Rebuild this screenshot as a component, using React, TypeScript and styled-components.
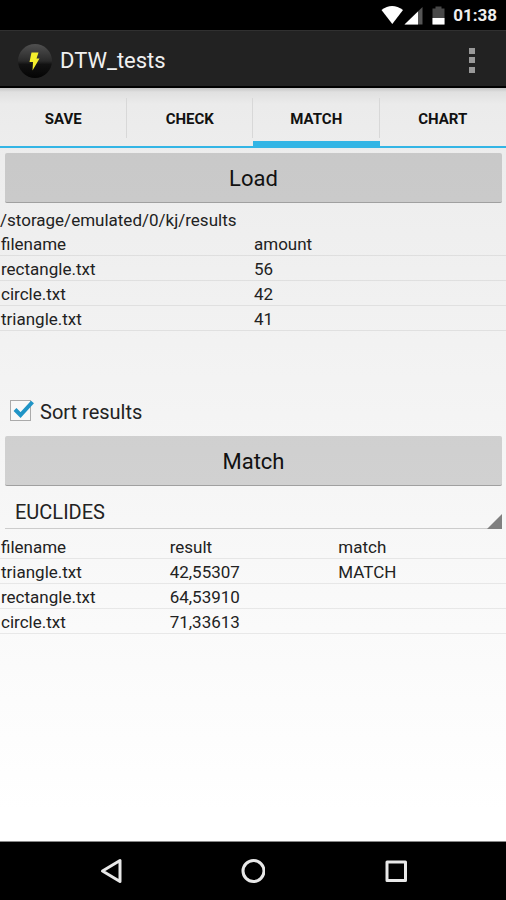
import { useState } from 'react';
import styled, { createGlobalStyle } from 'styled-components';

const TABS = ['SAVE', 'CHECK', 'MATCH', 'CHART'];

const FILES = [
    { filename: 'rectangle.txt', amount: '56' },
    { filename: 'circle.txt', amount: '42' },
    { filename: 'triangle.txt', amount: '41' },
];

const RESULTS = [
    { filename: 'triangle.txt', result: '42,55307', match: 'MATCH' },
    { filename: 'rectangle.txt', result: '64,53910', match: '' },
    { filename: 'circle.txt', result: '71,33613', match: '' },
];

const StatusIcons = () => (
    <svg width="66" height="20" viewBox="0 0 66 20" aria-hidden="true">
        <path d="M1.500 5Q12 -3 23 5L12.300 19Z" fill="#fff" />
        <path d="M42.500 2V19.500H24.500Z" fill="#555" />
        <path d="M38 6.500V19.500H24.500Z" fill="#fff" />
        <path d="M52.500 3.500H55.500V1.500H61.500V3.500H64.500V19.500H52.500Z" fill="#484848" />
        <path d="M52.500 13H64.500V19.500H52.500Z" fill="#fff" />
    </svg>
);

const AppIcon = () => (
    <svg width="36" height="36" viewBox="0 0 36 36" aria-hidden="true">
        <defs>
            <linearGradient id="ball" x1="0" y1="0" x2="0" y2="1">
                <stop offset="0" stopColor="#505050" />
                <stop offset="0.5" stopColor="#2a2a2a" />
                <stop offset="0.6" stopColor="#121212" />
                <stop offset="1" stopColor="#040404" />
            </linearGradient>
        </defs>
        <circle cx="18" cy="18" r="17" fill="url(#ball)" />
        <path d="M14.500 9.500H21.500L19.500 15.500H22.500L15.500 27.500L16 19H12.500Z" fill="#f4ef2c" />
    </svg>
);

const App = () => {
    const [tab, setTab] = useState<string>('MATCH');
    const [sort, setSort] = useState<boolean>(true);
    const [method, setMethod] = useState<string>('EUCLIDES');

    return (
        <Screen>
            <GlobalStyle />
            <StatusBar>
                <StatusIcons />
                <span>01:38</span>
            </StatusBar>
            <ActionBar>
                <AppIcon />
                <Title>DTW_tests</Title>
                <MenuButton aria-label="More options">
                    <svg width="8" height="28" viewBox="0 0 8 28" aria-hidden="true">
                        <path d="M1 1H7V7H1ZM1 10H7V16H1ZM1 20H7V26H1Z" fill="#999" />
                    </svg>
                </MenuButton>
            </ActionBar>
            <Tabs>
                {TABS.map((name) => (
                    <Tab key={name} $active={tab === name} onClick={() => setTab(name)}>{name}</Tab>
                ))}
            </Tabs>
            <Content>
                <WideButton>Load</WideButton>
                <Path>/storage/emulated/0/kj/results</Path>
                <Table>
                    <thead>
                        <tr>
                            <th>filename</th>
                            <th>amount</th>
                        </tr>
                    </thead>
                    <tbody>
                        {FILES.map((file) => (
                            <tr key={file.filename}>
                                <td>{file.filename}</td>
                                <td>{file.amount}</td>
                            </tr>
                        ))}
                    </tbody>
                </Table>
                <SortLabel>
                    <CheckBox>
                        <input type="checkbox" checked={sort} onChange={(e) => setSort(e.target.checked)} />
                        {sort && (
                            <svg width="26" height="22" viewBox="0 0 26 22" aria-hidden="true">
                                <path d="M5 9.500L10.500 15L22.500 2" fill="none" stroke="#1f94c6" strokeWidth="4" />
                            </svg>
                        )}
                    </CheckBox>
                    Sort results
                </SortLabel>
                <WideButton>Match</WideButton>
                <Spinner>
                    <select aria-label="Method" value={method} onChange={(e) => setMethod(e.target.value)}>
                        <option>EUCLIDES</option>
                    </select>
                    <svg width="15" height="15" viewBox="0 0 15 15" aria-hidden="true">
                        <path d="M15 0V15H0Z" fill="#808080" />
                    </svg>
                </Spinner>
                <Table>
                    <thead>
                        <tr>
                            <th>filename</th>
                            <th>result</th>
                            <th>match</th>
                        </tr>
                    </thead>
                    <tbody>
                        {RESULTS.map((row) => (
                            <tr key={row.filename}>
                                <td>{row.filename}</td>
                                <td>{row.result}</td>
                                <td>{row.match}</td>
                            </tr>
                        ))}
                    </tbody>
                </Table>
            </Content>
            <NavBar>
                <NavButton aria-label="Back">
                    <svg width="24" height="26" viewBox="0 0 24 26">
                        <path d="M21 2.500V23.500L3.500 13Z" />
                    </svg>
                </NavButton>
                <NavButton aria-label="Home">
                    <svg width="24" height="26" viewBox="0 0 24 26">
                        <circle cx="12.500" cy="13" r="10.500" />
                    </svg>
                </NavButton>
                <NavButton aria-label="Recent apps">
                    <svg width="24" height="26" viewBox="0 0 24 26">
                        <path d="M4 4H22.500V22.500H4Z" />
                    </svg>
                </NavButton>
            </NavBar>
        </Screen>
    );
}
export default App;

const GlobalStyle = createGlobalStyle`
    body {
        margin: 0;
    }
    * {
        box-sizing: border-box;
    }
    button, select, input {
        margin: 0;
        padding: 0;
        border: none;
        background: none;
        color: inherit;
        font: inherit;
    }
`;

const Screen = styled.div`
    display: flex;
    flex-direction: column;
    min-height: 100vh;
    background: linear-gradient(#ebebeb 10%, #ffffff 90%);
    font-family: Roboto, sans-serif;
    font-size: 17px;
    color: #222222;
`;

const StatusBar = styled.div`
    display: flex;
    justify-content: flex-end;
    align-items: center;
    gap: 7px;
    height: 30px;
    padding-right: 9px;
    background: #000000;
    color: #eeeeee;
    font-size: 17px;
    font-weight: 700;
`;

const ActionBar = styled.header`
    display: flex;
    align-items: center;
    height: 58px;
    padding: 4px 8px 0 17px;
    background: #222222;
    border-top: 1px solid #303030;
    border-bottom: 2px solid #000000;
`;

const Title = styled.h1`
    flex: 1;
    margin: 0 0 0 7px;
    font-size: 22px;
    font-weight: 400;
    color: #f0f0f0;
`;

const MenuButton = styled.button`
    display: flex;
    justify-content: center;
    align-items: center;
    width: 52px;
    height: 48px;
`;

const Tabs = styled.nav`
    display: flex;
    height: 60px;
    background: linear-gradient(#c4c4c4, #e0e0e0 4px, #ebebeb 16px, #ededed);
`;

const Tab = styled.button<{ $active: boolean }>`
    position: relative;
    flex: 1;
    padding-top: 4px;
    border-bottom: 2px solid #33b5e5;
    box-shadow: ${({ $active }) => ($active ? 'inset 0 -5px #33b5e5' : 'none')};
    color: #111111;
    font-size: 15px;
    font-weight: 700;
    &:not(:last-child)::after {
        content: '';
        position: absolute;
        top: 10px;
        right: 0;
        bottom: 8px;
        width: 1px;
        background: #d8d8d8;
    }
`;

const Content = styled.main`
    display: flex;
    flex-direction: column;
    flex: 1;
    padding-top: 5px;
`;

const WideButton = styled.button`
    height: 50px;
    margin: 0 4px 0 5px;
    padding-top: 2px;
    border-radius: 2px;
    border-bottom: 1px solid #a0a0a0;
    background: rgba(0, 0, 0, 0.15);
    color: #111111;
    font-size: 22px;
`;

const Path = styled.p`
    margin: 5px 0 0;
    padding-top: 1px;
    line-height: 22px;
`;

const Table = styled.table`
    width: 100%;
    table-layout: fixed;
    border-spacing: 0;
    th, td {
        height: 25px;
        padding: 2px 0 0 1px;
        border-bottom: 1px solid rgba(0, 0, 0, 0.07);
        font-weight: 400;
        line-height: 22px;
        text-align: left;
    }
`;

const SortLabel = styled.label`
    display: flex;
    align-items: center;
    align-self: flex-start;
    gap: 9px;
    margin-top: 56px;
    padding-left: 10px;
    height: 49px;
    font-size: 20px;
`;

const CheckBox = styled.span`
    position: relative;
    display: flex;
    margin-bottom: 2px;
    input {
        appearance: none;
        width: 21px;
        height: 21px;
        border: 1px solid #aaaaaa;
        background: #f8f8f8;
    }
    svg {
        position: absolute;
        top: 0;
        left: 0;
        pointer-events: none;
    }
`;

const Spinner = styled.div`
    position: relative;
    display: flex;
    margin: 9px 4px 5px 5px;
    border-bottom: 1px solid #cccccc;
    select {
        appearance: none;
        flex: 1;
        height: 33px;
        padding-left: 10px;
        font-size: 20px;
    }
    svg {
        position: absolute;
        right: 0;
        bottom: -1px;
        pointer-events: none;
    }
`;

const NavBar = styled.footer`
    display: flex;
    justify-content: center;
    height: 59px;
    border-top: 1px solid #888888;
    background: #000000;
`;

const NavButton = styled.button`
    display: flex;
    justify-content: center;
    align-items: center;
    width: 28%;
    svg {
        fill: none;
        stroke: #e8e8e8;
        stroke-width: 3;
        stroke-linejoin: round;
    }
`;
